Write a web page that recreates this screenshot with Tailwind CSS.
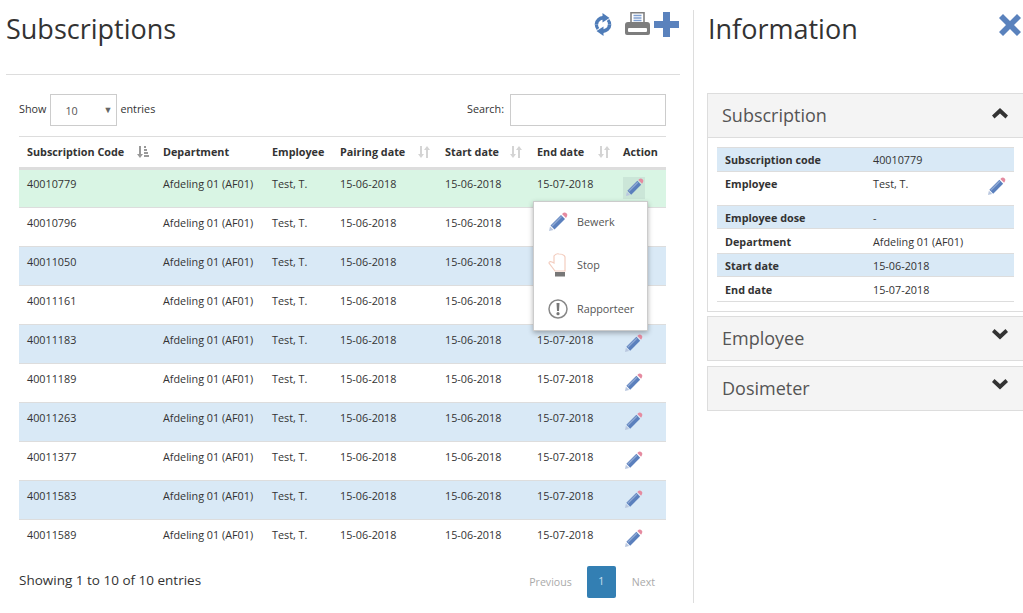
<!DOCTYPE html>
<html>
<head>
<meta charset="utf-8">
<script src="https://cdn.jsdelivr.net/npm/@tailwindcss/browser@4"></script>
</head>
<body class="bg-white overflow-hidden font-['Open_Sans',sans-serif] text-[#333]">
<svg width="0" height="0" class="absolute">
  <defs>
    <symbol id="pencil" viewBox="0 0 20 20">
      <path d="M1 19 L2 14.5 L5.5 18 Z" fill="#b9c7df"/>
      <path d="M2.5 13.5 L13 3 L17 7 L6.5 17.5 Z" fill="#5b80bd"/>
      <path d="M3.5 13.5 L13 4 L14 5 L4.5 14.5 Z" fill="#8fa9d4"/>
      <path d="M14 2 L15.5 .8 Q17 0 18.5 1.2 Q20 2.6 19 4.2 L18 6 Z" fill="#e58ba0"/>
    </symbol>
  </defs>
</svg>
<div class="flex w-[1023px] h-[613px]">
  <div class="w-[694px] h-[593px] mt-[10px] border-r border-[#ddd] shrink-0 relative">
    <div class="h-[65px] mr-[13px] ml-[6px] border-b border-[#ddd] flex justify-between">
      <h1 class="text-[27px] leading-[36px] mt-[1px] text-[#333]">Subscriptions</h1>
      <div class="flex items-start mr-[1px]">
        <svg class="w-[18px] h-[23px] mt-[3px] mr-[13px]" viewBox="0 0 18 23" fill="none">
          <path d="M2.4 11.5 A6.6 6.6 0 0 1 10 5" stroke="#4f7cb8" stroke-width="3.6"/>
          <path d="M15.6 11.5 A6.6 6.6 0 0 1 8 18" stroke="#4f7cb8" stroke-width="3.6"/>
          <path d="M8.5 0 L15.5 5 L8.5 9.6 Z" fill="#4f7cb8"/>
          <path d="M9.5 13.4 L2.5 18 L9.5 23 Z" fill="#4f7cb8"/>
          <path d="M15.6 11.5 A6.6 6.6 0 0 0 14 7" stroke="#4f7cb8" stroke-width="3.2"/>
          <path d="M2.4 11.5 A6.6 6.6 0 0 0 4 16" stroke="#4f7cb8" stroke-width="3.2"/>
        </svg>
        <svg class="w-[25px] h-[23px] mt-[2px] mr-[4px]" viewBox="0 0 25 23">
          <path d="M6 .8 H19 V11 H6 Z" fill="#fff" stroke="#808080" stroke-width="1.6"/>
          <path d="M8.5 3.5 H16.5 M8.5 6 H16.5 M8.5 8.5 H16.5" stroke="#7f9fd0" stroke-width="1.3"/>
          <path d="M3 10 H22 Q25 10 25 13 V21 Q25 23 23 23 H2 Q0 23 0 21 V13 Q0 10 3 10 Z" fill="#7d7d7d"/>
          <rect x="3" y="16" width="19" height="4" rx="1" fill="#fff"/>
        </svg>
        <svg class="w-[25px] h-[25px] mt-[2px]" viewBox="0 0 25 25"><path d="M9 0 H16 V9 H25 V16 H16 V25 H9 V16 H0 V9 H9 Z" fill="#5a82bd"/></svg>
      </div>
    </div>
    <div class="flex justify-between items-center ml-[19px] mr-[27px] mt-[19px] h-[32px] text-[10.8px]">
      <div class="flex items-center">
        <span class="-mt-[2px]">Show</span>
        <div class="ml-[4px] w-[67px] h-[32px] border border-[#ccc] flex items-center justify-between pl-[14px] pr-[4px] text-[#555]">
          <span class="mt-[2px]">10</span><span class="text-[9px] text-[#666]">▼</span>
        </div>
        <span class="ml-[3px] -mt-[2px]">entries</span>
      </div>
      <div class="flex items-center">
        <span class="-mt-[2px]">Search:</span>
        <div class="ml-[6px] w-[156px] h-[32px] border border-[#ccc]"></div>
      </div>
    </div>
    <table class="ml-[19px] mt-[10px] w-[647px] table-fixed border-collapse text-[10.8px] leading-[16px]">
      <thead>
        <tr class="h-[32px] border-t border-[#ddd] border-b-[3px] border-b-[#ddd] font-bold text-left">
          <th class="w-[136px] pl-[8px] relative">Subscription Code<svg class="absolute right-[6px] top-[9px] w-[12px] h-[12px]" viewBox="0 0 12 12" fill="#999"><path d="M2 0 H4 V8 H6 L3 12 L0 8 H2 Z"/><path d="M7 0 H9 V2 H7 Z M7 3 H10 V5 H7 Z M7 6 H11 V8 H7 Z M7 9 H12 V11 H7 Z"/></svg></th>
          <th class="w-[109px] pl-[8px]">Department</th>
          <th class="w-[68px] pl-[8px]">Employee</th>
          <th class="w-[105px] pl-[8px] relative">Pairing date<svg class="absolute right-[7px] top-[9px] w-[12px] h-[12px]" viewBox="0 0 12 12" fill="#d4d4d4"><path d="M2 0 H4 V8 H6 L3 12 L0 8 H2 Z"/><path d="M8 12 H10 V4 H12 L9 0 L6 4 H8 Z"/></svg></th>
          <th class="w-[92px] pl-[8px] relative">Start date<svg class="absolute right-[7px] top-[9px] w-[12px] h-[12px]" viewBox="0 0 12 12" fill="#d4d4d4"><path d="M2 0 H4 V8 H6 L3 12 L0 8 H2 Z"/><path d="M8 12 H10 V4 H12 L9 0 L6 4 H8 Z"/></svg></th>
          <th class="w-[86px] pl-[8px] relative">End date<svg class="absolute right-[5px] top-[9px] w-[12px] h-[12px]" viewBox="0 0 12 12" fill="#d4d4d4"><path d="M2 0 H4 V8 H6 L3 12 L0 8 H2 Z"/><path d="M8 12 H10 V4 H12 L9 0 L6 4 H8 Z"/></svg></th>
          <th class="pl-[8px]">Action</th>
        </tr>
      </thead>
      <tbody class="[&_td]:pb-[8px]">
        <tr class="h-[39px] bg-[#d9f5e4] border-b border-[#ddd] [&>td]:pb-[10px]!"><td class="pl-[8px]">40010779</td><td class="pl-[8px]">Afdeling 01 (AF01)</td><td class="pl-[8px]">Test, T.</td><td class="pl-[8px]">15-06-2018</td><td class="pl-[8px]">15-06-2018</td><td class="pl-[8px]">15-07-2018</td><td class="pl-[8px]"><div class="w-[22px] h-[22px] mt-[4px] -mb-[4px] bg-[#cbe6d8] flex items-center justify-center"><svg class="w-[19px] h-[19px]"><use href="#pencil"/></svg></div></td></tr>
        <tr class="h-[39px] bg-white border-b border-[#ddd]"><td class="pl-[8px]">40010796</td><td class="pl-[8px]">Afdeling 01 (AF01)</td><td class="pl-[8px]">Test, T.</td><td class="pl-[8px]">15-06-2018</td><td class="pl-[8px]">15-06-2018</td><td class="pl-[8px]">15-07-2018</td><td class="pl-[9px]"><svg class="w-[19px] h-[19px] mt-[6px]"><use href="#pencil"/></svg></td></tr>
        <tr class="h-[39px] bg-[#d9e9f6] border-b border-[#ddd]"><td class="pl-[8px]">40011050</td><td class="pl-[8px]">Afdeling 01 (AF01)</td><td class="pl-[8px]">Test, T.</td><td class="pl-[8px]">15-06-2018</td><td class="pl-[8px]">15-06-2018</td><td class="pl-[8px]">15-07-2018</td><td class="pl-[9px]"><svg class="w-[19px] h-[19px] mt-[6px]"><use href="#pencil"/></svg></td></tr>
        <tr class="h-[39px] bg-white border-b border-[#ddd]"><td class="pl-[8px]">40011161</td><td class="pl-[8px]">Afdeling 01 (AF01)</td><td class="pl-[8px]">Test, T.</td><td class="pl-[8px]">15-06-2018</td><td class="pl-[8px]">15-06-2018</td><td class="pl-[8px]">15-07-2018</td><td class="pl-[9px]"><svg class="w-[19px] h-[19px] mt-[6px]"><use href="#pencil"/></svg></td></tr>
        <tr class="h-[39px] bg-[#d9e9f6] border-b border-[#ddd]"><td class="pl-[8px]">40011183</td><td class="pl-[8px]">Afdeling 01 (AF01)</td><td class="pl-[8px]">Test, T.</td><td class="pl-[8px]">15-06-2018</td><td class="pl-[8px]">15-06-2018</td><td class="pl-[8px]">15-07-2018</td><td class="pl-[9px]"><svg class="w-[19px] h-[19px] mt-[6px]"><use href="#pencil"/></svg></td></tr>
        <tr class="h-[39px] bg-white border-b border-[#ddd]"><td class="pl-[8px]">40011189</td><td class="pl-[8px]">Afdeling 01 (AF01)</td><td class="pl-[8px]">Test, T.</td><td class="pl-[8px]">15-06-2018</td><td class="pl-[8px]">15-06-2018</td><td class="pl-[8px]">15-07-2018</td><td class="pl-[9px]"><svg class="w-[19px] h-[19px] mt-[6px]"><use href="#pencil"/></svg></td></tr>
        <tr class="h-[39px] bg-[#d9e9f6] border-b border-[#ddd]"><td class="pl-[8px]">40011263</td><td class="pl-[8px]">Afdeling 01 (AF01)</td><td class="pl-[8px]">Test, T.</td><td class="pl-[8px]">15-06-2018</td><td class="pl-[8px]">15-06-2018</td><td class="pl-[8px]">15-07-2018</td><td class="pl-[9px]"><svg class="w-[19px] h-[19px] mt-[6px]"><use href="#pencil"/></svg></td></tr>
        <tr class="h-[39px] bg-white border-b border-[#ddd]"><td class="pl-[8px]">40011377</td><td class="pl-[8px]">Afdeling 01 (AF01)</td><td class="pl-[8px]">Test, T.</td><td class="pl-[8px]">15-06-2018</td><td class="pl-[8px]">15-06-2018</td><td class="pl-[8px]">15-07-2018</td><td class="pl-[9px]"><svg class="w-[19px] h-[19px] mt-[6px]"><use href="#pencil"/></svg></td></tr>
        <tr class="h-[39px] bg-[#d9e9f6] border-b border-[#ddd]"><td class="pl-[8px]">40011583</td><td class="pl-[8px]">Afdeling 01 (AF01)</td><td class="pl-[8px]">Test, T.</td><td class="pl-[8px]">15-06-2018</td><td class="pl-[8px]">15-06-2018</td><td class="pl-[8px]">15-07-2018</td><td class="pl-[9px]"><svg class="w-[19px] h-[19px] mt-[6px]"><use href="#pencil"/></svg></td></tr>
        <tr class="h-[39px] bg-white"><td class="pl-[8px]">40011589</td><td class="pl-[8px]">Afdeling 01 (AF01)</td><td class="pl-[8px]">Test, T.</td><td class="pl-[8px]">15-06-2018</td><td class="pl-[8px]">15-06-2018</td><td class="pl-[8px]">15-07-2018</td><td class="pl-[9px]"><svg class="w-[19px] h-[19px] mt-[6px]"><use href="#pencil"/></svg></td></tr>
      </tbody>
    </table>
    <div class="flex justify-between items-start ml-[19px] mr-[38px] mt-[7px]">
      <span class="text-[13.5px] leading-[20px] mt-[4px]">Showing 1 to 10 of 10 entries</span>
      <div class="flex items-center text-[10.6px] text-[#aaa]">
        <span class="mr-[15px] mt-[2px]">Previous</span>
        <span class="w-[29px] h-[32px] rounded-[2px] bg-[#337fb3] text-[#c9dfee] flex items-center justify-center">1</span>
        <span class="ml-[16px] mt-[2px]">Next</span>
      </div>
    </div>
    <div class="absolute left-[533px] top-[191px] w-[115px] h-[130px] bg-white border border-[#ccc] shadow-[0_2px_5px_rgba(0,0,0,0.3)] text-[10.8px] text-[#555]">
      <div class="absolute left-[14px] top-[9px] flex items-center h-[22px]"><svg class="w-[20px] h-[20px]"><use href="#pencil"/></svg><span class="ml-[9px]">Bewerk</span></div>
      <div class="absolute left-[14px] top-[50px] flex items-center h-[26px]"><svg class="w-[20px] h-[25px]" viewBox="0 0 20 25" fill="none"><path d="M7 18 L1 10 Q1 8 4 9 L6 10 L6 3 Q8 0 11 1 Q16 1 17 4 L17 18 Z" fill="#fff" stroke="#f3cdbf" stroke-width="1.2"/><rect x="7" y="19" width="10" height="4.5" fill="#777"/></svg><span class="ml-[9px]">Stop</span></div>
      <div class="absolute left-[14px] top-[96px] flex items-center h-[22px]"><svg class="w-[20px] h-[20px]" viewBox="0 0 20 20" fill="none"><circle cx="10" cy="10" r="9" stroke="#888" stroke-width="1.5"/><path d="M8.5 4 H11.5 L11 12 H9 Z" fill="#777"/><circle cx="10" cy="14.7" r="1.6" fill="#777"/></svg><span class="ml-[9px]">Rapporteer</span></div>
    </div>
  </div>
  <div class="flex-1 min-w-0 pl-[13px] relative">
    <div class="h-[93px] flex justify-between">
      <h2 class="text-[27px] leading-[36px] mt-[11px] ml-[1px]">Information</h2>
      <svg class="w-[22px] h-[22px] mt-[14px] mr-[2px]" viewBox="0 0 22 22"><path d="M0 4 L4 0 L11 7 L18 0 L22 4 L15 11 L22 18 L18 22 L11 15 L4 22 L0 18 L7 11 Z" fill="#5a82bd"/></svg>
    </div>
    <div class="border border-r-0 border-[#ddd] h-[219px]">
      <div class="h-[44px] bg-[#f4f4f4] border-b border-[#ddd] flex items-center justify-between pl-[14px] pr-[15px]">
        <span class="text-[18px] text-[#555]">Subscription</span>
        <svg class="w-[16px] h-[11px] -mt-[5px]" viewBox="0 0 16 11"><path d="M0 7.5 L8 0 L16 7.5 L13.5 10.5 L8 5.5 L2.5 10.5 Z" fill="#333"/></svg>
      </div>
      <div class="mt-[9px] ml-[9px] w-[297px] text-[10.8px] leading-[16px]">
        <div class="h-[25px] bg-[#d9e9f6] border-t border-b border-[#ddd] flex items-center"><span class="w-[156px] pl-[8px] font-bold">Subscription code</span><span>40010779</span></div>
        <div class="h-[33px] flex items-start pt-[4px] relative"><span class="w-[156px] pl-[8px] font-bold">Employee</span><span>Test, T.</span><svg class="absolute right-[8px] top-[5px] w-[19px] h-[19px]"><use href="#pencil"/></svg></div>
        <div class="h-[24px] pt-px bg-[#d9e9f6] border-t border-b border-[#ddd] flex items-center"><span class="w-[156px] pl-[8px] font-bold">Employee dose</span><span>-</span></div>
        <div class="h-[24px] pt-px flex items-center"><span class="w-[156px] pl-[8px] font-bold">Department</span><span>Afdeling 01 (AF01)</span></div>
        <div class="h-[24px] pt-px bg-[#d9e9f6] border-t border-b border-[#ddd] flex items-center"><span class="w-[156px] pl-[8px] font-bold">Start date</span><span>15-06-2018</span></div>
        <div class="h-[25px] pt-[2px] border-b border-[#ddd] flex items-center"><span class="w-[156px] pl-[8px] font-bold">End date</span><span>15-07-2018</span></div>
      </div>
    </div>
    <div class="mt-[4px] h-[45px] bg-[#f4f4f4] border border-r-0 border-[#ddd] flex items-center justify-between pl-[14px] pr-[15px]">
      <span class="text-[18px] text-[#555]">Employee</span>
      <svg class="w-[16px] h-[11px] -mt-[8px]" viewBox="0 0 16 11"><path d="M0 3 L8 10.5 L16 3 L13.5 0 L8 5 L2.5 0 Z" fill="#333"/></svg>
    </div>
    <div class="mt-[5px] h-[45px] bg-[#f4f4f4] border border-r-0 border-[#ddd] flex items-center justify-between pl-[14px] pr-[15px]">
      <span class="text-[18px] text-[#555]">Dosimeter</span>
      <svg class="w-[16px] h-[11px] -mt-[8px]" viewBox="0 0 16 11"><path d="M0 3 L8 10.5 L16 3 L13.5 0 L8 5 L2.5 0 Z" fill="#333"/></svg>
    </div>
  </div>
</div>
</body>
</html>
